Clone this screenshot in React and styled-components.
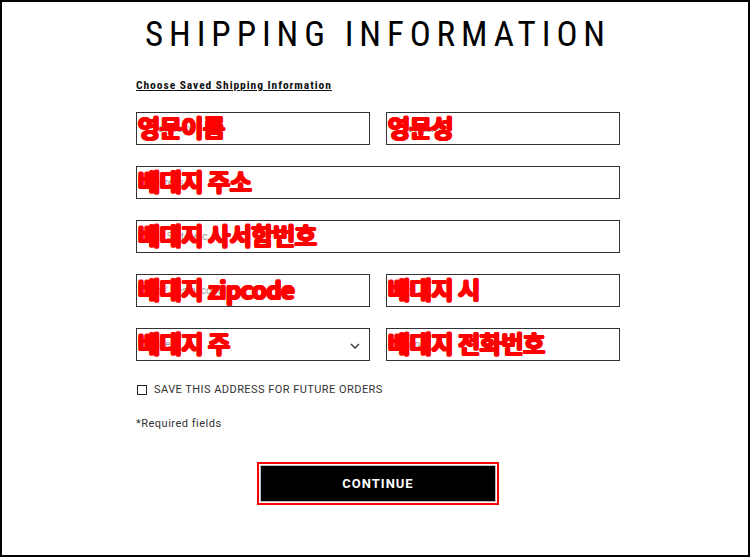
import styled, { createGlobalStyle } from "styled-components";

const GlobalStyle = createGlobalStyle`
  html, body {
    margin: 0;
    padding: 0;
    background: #fff;
  }
  * {
    box-sizing: border-box;
  }
`;

const Page = styled.div`
  width: 750px;
  height: 557px;
  border: 2px solid #000;
  background: #fff;
  font-family: Roboto, "Noto Sans", sans-serif;
  color: #111;
`;

const Title = styled.h1`
  margin: 13px 0 0;
  padding-left: 6px;
  font-family: "Liberation Sans Narrow", "Roboto Condensed", Roboto, sans-serif;
  font-weight: 400;
  font-size: 35px;
  line-height: 40px;
  letter-spacing: 5.9px;
  text-align: center;
  color: #000;
`;

const Form = styled.form`
  width: 484px;
  margin-left: 134px;
  display: flex;
  flex-direction: column;
`;

const SavedLink = styled.a`
  align-self: flex-start;
  margin-top: 23px;
  font-family: "Liberation Sans Narrow", "Roboto Condensed", Roboto, sans-serif;
  font-weight: 700;
  font-size: 11.5px;
  line-height: 14px;
  letter-spacing: 0.95px;
  color: #111;
  text-decoration: underline;
`;

const Grid = styled.div`
  margin-top: 20px;
  display: grid;
  grid-template-columns: 234px 234px;
  grid-auto-rows: 33px;
  column-gap: 16px;
  row-gap: 21px;
`;

const Field = styled.div`
  position: relative;
  grid-column: ${(p) => (p.$wide ? "1 / span 2" : "auto")};
`;

const Input = styled.input`
  width: 100%;
  height: 100%;
  margin: 0;
  border: 1px solid #333;
  border-radius: 0;
  padding: 0 10px;
  font-family: Roboto, sans-serif;
  font-size: 10px;
  color: #111;
  background: #fff;
  outline: none;

  &::placeholder {
    color: #9a9a9a;
  }
`;

const Select = styled.select`
  width: 100%;
  height: 100%;
  margin: 0;
  border: 1px solid #333;
  border-radius: 0;
  padding: 0 10px;
  appearance: none;
  font-family: Roboto, sans-serif;
  font-size: 10px;
  color: #9a9a9a;
  background: #fff;
  outline: none;
`;

const Chevron = styled.svg`
  position: absolute;
  right: 10px;
  top: 15px;
  width: 10px;
  height: 6px;
  pointer-events: none;
`;

const Note = styled.span`
  position: absolute;
  left: 2px;
  top: 3px;
  font-family: "Noto Sans CJK KR", "Noto Sans", sans-serif;
  font-weight: 500;
  font-size: 24px;
  line-height: 24px;
  letter-spacing: -0.4px;
  white-space: nowrap;
  color: #ff0000;
  -webkit-text-stroke: 1.2px #fff;
  paint-order: stroke fill;
  text-shadow: 1.4px 0 0 #ff0000, -1.4px 0 0 #ff0000, 0 1.4px 0 #ff0000,
    0 -1.4px 0 #ff0000, 1px 1px 0 #ff0000, -1px -1px 0 #ff0000,
    1px -1px 0 #ff0000, -1px 1px 0 #ff0000;
  pointer-events: none;
`;

const CheckRow = styled.label`
  margin-top: 21px;
  display: flex;
  align-items: center;
  gap: 7px;
  height: 15px;
  padding-left: 1px;
  font-size: 11px;
  line-height: 15px;
  letter-spacing: 0.45px;
  color: #333;
`;

const Box = styled.span`
  width: 10px;
  height: 10px;
  border: 1px solid #222;
  background: #fff;
`;

const Required = styled.p`
  margin: 19px 0 0;
  font-size: 11px;
  line-height: 15px;
  letter-spacing: 0.5px;
  color: #333;
`;

const Continue = styled.button`
  align-self: center;
  margin-top: 34px;
  width: 236px;
  height: 37px;
  border: 1px solid #bdbdbd;
  background: #000;
  color: #fff;
  font-family: Roboto, sans-serif;
  font-weight: 700;
  font-size: 13px;
  letter-spacing: 1px;
  outline: 2px solid #ff0000;
  outline-offset: 1px;
  cursor: pointer;
`;

const fields = [
  { note: "영문이름", placeholder: "First Name" },
  { note: "영문성", placeholder: "Last Name" },
  { note: "배대지 주소", placeholder: "Address", wide: true },
  { note: "배대지 사서함번호", placeholder: "Apt, Suite, etc.", wide: true },
  { note: "배대지 zipcode", placeholder: "Zip / Postal code" },
  { note: "배대지 시", placeholder: "City" },
  { note: "배대지 주", placeholder: "State", select: true },
  { note: "배대지 전화번호", placeholder: "Phone" },
];

export default function App() {
  return (
    <>
      <GlobalStyle />
      <Page>
        <Title>SHIPPING INFORMATION</Title>
        <Form onSubmit={(e) => e.preventDefault()}>
          <SavedLink href="#">Choose Saved Shipping Information</SavedLink>
          <Grid>
            {fields.map((f) => (
              <Field key={f.note} $wide={f.wide}>
                {f.select ? (
                  <>
                    <Select defaultValue="">
                      <option value="">{f.placeholder}</option>
                    </Select>
                    <Chevron viewBox="0 0 10 6">
                      <path
                        d="M1 1l4 4 4-4"
                        fill="none"
                        stroke="#333"
                        strokeWidth="1.3"
                      />
                    </Chevron>
                  </>
                ) : (
                  <Input placeholder={f.placeholder} />
                )}
                <Note>{f.note}</Note>
              </Field>
            ))}
          </Grid>
          <CheckRow>
            <Box />
            SAVE THIS ADDRESS FOR FUTURE ORDERS
          </CheckRow>
          <Required>*Required fields</Required>
          <Continue type="submit">CONTINUE</Continue>
        </Form>
      </Page>
    </>
  );
}
